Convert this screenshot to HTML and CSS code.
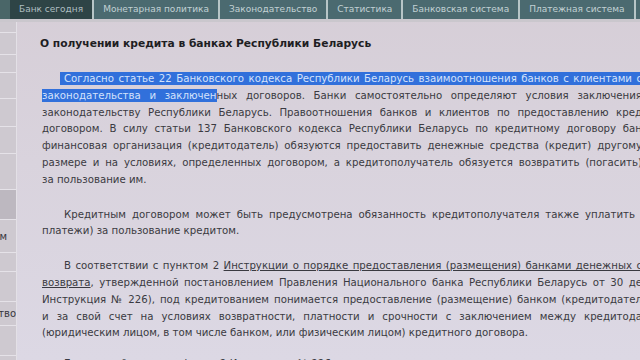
FILE: index.html
```html
<!DOCTYPE html>
<html lang="ru">
<head>
<meta charset="utf-8">
<title>О получении кредита в банках Республики Беларусь</title>
<link rel="stylesheet" href="styles.css">
</head>
<body>
<nav class="nav">
  <div class="tab active">Банк сегодня</div>
  <div class="tab">Монетарная политика</div>
  <div class="tab">Законодательство</div>
  <div class="tab">Статистика</div>
  <div class="tab">Банковская система</div>
  <div class="tab">Платежная система</div>
  <div class="tab">Публикации</div>
</nav>
<div class="strip"></div>
<div class="main">
  <aside class="side">
    <div class="side-item s11"></div>
    <div class="side-item s22"></div>
    <div class="side-item s18"></div>
    <div class="side-item s26"></div>
    <div class="side-item s28"></div>
    <div class="side-item s27"></div>
    <div class="side-item s36"></div>
    <div class="side-item s30 dark"></div>
    <div class="side-item s33 pad-r"><span>Физическим лицам</span></div>
    <div class="side-item s19"></div>
    <div class="side-item s30"></div>
    <div class="side-item s24"><span>Законодательство</span></div>
    <div class="side-item s30"></div>
  </aside>
  <article class="content">
    <h1 class="title">О получении кредита в банках Республики Беларусь</h1>
    <div class="para">
      <div class="ln first"><span class="sel sel-start">Согласно статье 22 Банковского кодекса Республики Беларусь взаимоотношения банков с клиентами с</span></div>
      <div class="ln"><span class="sel">законодательства и заключен</span>ных договоров. Банки самостоятельно определяют условия заключения</div>
      <div class="ln">законодательству Республики Беларусь. Правоотношения банков и клиентов по предоставлению кред</div>
      <div class="ln">договором. В силу статьи 137 Банковского кодекса Республики Беларусь по кредитному договору бан</div>
      <div class="ln">финансовая организация (кредитодатель) обязуются предоставить денежные средства (кредит) другому</div>
      <div class="ln">размере и на условиях, определенных договором, а кредитополучатель обязуется возвратить (погасить)</div>
      <div class="ln last">за пользование им.</div>
    </div>
    <div class="para">
      <div class="ln first short">Кредитным договором может быть предусмотрена обязанность кредитополучателя также уплатить</div>
      <div class="ln last">платежи) за пользование кредитом.</div>
    </div>
    <div class="para tight">
      <div class="ln first">В соответствии с пунктом 2 <span class="link">Инструкции о порядке предоставления (размещения) банками денежных с</span></div>
      <div class="ln"><span class="link">возврата</span>, утвержденной постановлением Правления Национального банка Республики Беларусь от 30 де</div>
      <div class="ln">Инструкция № 226), под кредитованием понимается предоставление (размещение) банком (кредитодател</div>
      <div class="ln">и за свой счет на условиях возвратности, платности и срочности с заключением между кредитода</div>
      <div class="ln last">(юридическим лицом, в том числе банком, или физическим лицом) кредитного договора.</div>
    </div>
    <div class="para">
      <div class="ln first last">Банковский кредит в форме 2 Инструкции № 226 предоставляется</div>
    </div>
  </article>
</div>
</body>
</html>
```

FILE: styles.css
```css
html, body {
  margin: 0;
  padding: 0;
}
body {
  width: 640px;
  height: 360px;
  overflow: hidden;
  background: linear-gradient(180deg, #d6ced7 0%, #d9d3dd 45%, #dcd8e4 100%);
  font-family: "DejaVu Sans", "Liberation Sans", sans-serif;
}
.nav {
  display: flex;
  height: 19px;
  background: #4a6668;
  padding-left: 10px;
  overflow: hidden;
}
.tab {
  flex: none;
  padding: 0 9px;
  line-height: 19px;
  font-size: 9px;
  color: #c2d1d4;
  background: #4b6a70;
  border-right: 2px solid #b7c5c7;
  white-space: nowrap;
}
.tab.active {
  background: #2e4446;
  color: #aebfc1;
}
.strip {
  height: 3px;
  background: #cac7cd;
}
.main {
  display: flex;
  height: 338px;
}
.side {
  flex: none;
  width: 16px;
  background: #cec9d0;
  border-right: 1px solid #e3e0e6;
  display: flex;
  flex-direction: column;
  overflow: hidden;
}
.side-item {
  flex: none;
  border-bottom: 1px solid #e5e2e8;
  display: flex;
  align-items: center;
  justify-content: flex-end;
  overflow: hidden;
  font-size: 10px;
  color: #36363c;
  white-space: nowrap;
}
.side-item span {
  flex: none;
}
.side-item.pad-r { padding-right: 9px; }
.side-item.dark { background: #bdb8c0; }
.s11 { height: 10px; }
.s18 { height: 17px; }
.s19 { height: 18px; }
.s22 { height: 21px; }
.s24 { height: 23px; }
.s26 { height: 25px; }
.s27 { height: 26px; }
.s28 { height: 27px; }
.s30 { height: 29px; }
.s33 { height: 32px; }
.s36 { height: 35px; }
.content {
  flex: 1;
  min-width: 0;
  padding: 13px 0 0 25px;
  color: #3a3a41;
  font-size: 10.2px;
  line-height: 16.8px;
}
.title {
  margin: 0 0 19px -2px;
  font-size: 10.7px;
  line-height: 17px;
  font-weight: bold;
  color: #1e1e23;
}
.para {
  width: 600px;
  margin-bottom: 18px;
}
.para.tight {
  margin-bottom: 14px;
}
.ln {
  white-space: nowrap;
  text-align: justify;
  text-align-last: justify;
}
.ln.first {
  padding-left: 22px;
}
.ln.short {
  padding-right: 7px;
}
.ln.last {
  text-align-last: left;
}
.sel {
  background: #3170db;
  color: #d3e2fb;
  padding: 1px 0;
}
.sel-start {
  margin-left: -4px;
  padding-left: 4px;
}
.link {
  text-decoration: underline;
}
```
